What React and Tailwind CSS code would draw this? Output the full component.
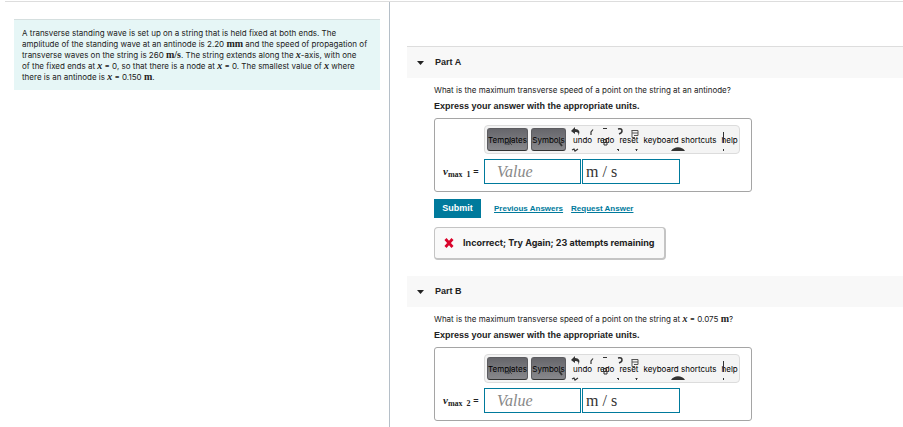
const parts = [
  { id: "a", title: "Part A", index: 1, attempts: 23 },
  { id: "b", title: "Part B", index: 2 },
];

function Var({ children }) {
  return <i className="font-['Liberation_Serif',serif] text-[10px] font-bold leading-none">{children}</i>;
}

function Unit({ children }) {
  return <span className="font-['Liberation_Serif',serif] text-[10px] font-bold leading-none">{children}</span>;
}

// clipped toolbar icons that show through behind the labels
function ToolbarMarks() {
  return (
    <svg
      className="pointer-events-none absolute -left-px -top-px"
      width="256"
      height="29"
      viewBox="0 0 256 29"
      fill="none"
      stroke="#333"
      aria-hidden="true"
    >
      <path d="M91 2l-4 4 4 3V7c3 0 4 1 3 4 3-4 1-7-3-7z" fill="#333" stroke="none" />
      <path d="M88 25l2-1 1 2 3-2M109 4.500l-2 2.500v3" strokeWidth="1.2" />
      <path d="M25 13v7M28 14l-3 3 3 3M22 19h3" strokeWidth=".8" />
      <path d="M75 17l3 4" strokeWidth="1.8" />
      <path d="M119 3.500h4" />
      <path d="M119.500 14.500h3v3h-3zM120 17.500h3v2.500h-3z" strokeWidth="1" />
      <path d="M134 4q4-1 4 2q0 2-3 3" strokeWidth="1.5" />
      <path d="M133 24.500h2M151.500 24.500h2M134.500 24v2M152.500 24v2" strokeWidth="1" />
      <path d="M147.500 5.500h6.500v5M148 5.500v7h3M148 8h6M150 10.500h4" stroke="#555" />
      <path d="M187 26c3-5 11-5 14 0z" fill="#333" stroke="none" />
      <path d="M239.500 7v11M239.500 24v2" />
    </svg>
  );
}

function PadButton({ children }) {
  return (
    <button
      type="button"
      className="flex h-[23px] items-center justify-center rounded-[3px] border border-b-[#333] border-[#5c5c60] bg-linear-to-b from-[#66666b] to-[#88888c] text-black"
    >
      {children}
    </button>
  );
}

function Toolbar() {
  return (
    <div className="relative flex h-[29px] w-64 items-center rounded border border-[#dcdcdc] bg-[#f4f4f4] pl-[2px] font-['Inter',sans-serif] text-[8px] leading-3 text-black">
      <div className="grid grid-cols-[41px_35px] gap-[3px]">
        <PadButton>Templates</PadButton>
        <PadButton>Symbols</PadButton>
      </div>
      <div className="ml-[7px] flex gap-[5px] whitespace-nowrap">
        <button type="button">undo</button>
        <button type="button">redo</button>
        <button type="button">reset</button>
        <button type="button">keyboard shortcuts</button>
        <button type="button">help</button>
      </div>
      <ToolbarMarks />
    </div>
  );
}

function AnswerBox({ index }) {
  const field =
    "h-[25px] border border-[#007a9c] bg-white font-['Liberation_Serif',serif] text-base leading-5 text-[#333] outline-none";
  return (
    <div className="w-[318px] rounded-[3px] border border-[#a5a5a5] pb-[7px] pl-2 pt-[6px]">
      <div className="ml-[41px]">
        <Toolbar />
      </div>
      <div className="mt-[5px] flex items-center">
        <label
          htmlFor={"value-" + index}
          className="w-[41px] whitespace-nowrap font-['Liberation_Serif',serif] text-[11px] font-bold leading-3"
        >
          <i>v</i>
          <sub className="text-[8px] leading-none">max&nbsp; {index}</sub>{" "}
          <span className="font-['Liberation_Sans',sans-serif] text-[9px]">=</span>
        </label>
        <div className="flex gap-px">
          <input
            id={"value-" + index}
            placeholder="Value"
            className={field + " w-[97px] pl-3 placeholder:italic placeholder:text-[#888]"}
          />
          <input aria-label="Units" defaultValue="m / s" className={field + " w-[98px] pl-[3px]"} />
        </div>
      </div>
    </div>
  );
}

function Feedback({ attempts }) {
  return (
    <>
      <div className="mt-[7px] flex items-center">
        <button type="button" className="h-[19px] w-[47px] bg-[#007a9c] text-[9px] font-bold text-white">
          Submit
        </button>
        <a href="#previous" className="ml-[13px] text-[8px] font-bold text-[#007a9c] underline">
          Previous Answers
        </a>
        <a href="#request" className="ml-2 text-[8px] font-bold text-[#007a9c] underline">
          Request Answer
        </a>
      </div>
      <div className="mt-[9px] flex h-[33px] w-fit items-center rounded border border-b-2 border-r-2 border-[#c4c4c4] bg-[#f9f9f9] px-[9px] font-['Inter',sans-serif] text-[9px] font-bold">
        <svg width="10" height="10" viewBox="0 0 10 10" aria-hidden="true">
          <path d="M1.500 1l7 8M8.500 1l-7 8" stroke="#d9042b" strokeWidth="2.800" />
        </svg>
        <span className="ml-[9px]">Incorrect; Try Again; {attempts} attempts remaining</span>
      </div>
    </>
  );
}

function Part({ part, children }) {
  return (
    <section>
      <h2
        className={
          "flex items-center bg-[#f8f8f8] pl-[10px] text-[9px] font-bold " +
          (part.id === "a" ? "h-8 border-t border-[#ddd]" : "h-[31px]")
        }
      >
        <svg width="7" height="4" viewBox="0 0 7 4" aria-hidden="true">
          <path d="M0 0h7L3.500 4z" fill="#222" />
        </svg>
        <span className="ml-[11px]">{part.title}</span>
      </h2>
      <div className="pl-[27px] pt-1">
        <p className="font-['Inter',sans-serif] text-[8px] leading-4">
          What is the maximum transverse speed of a point on the string at {children}
        </p>
        <p className="mb-1 text-[9px] font-bold leading-4">
          Express your answer with the appropriate units.
        </p>
        <AnswerBox index={part.index} />
        {part.attempts && <Feedback attempts={part.attempts} />}
      </div>
    </section>
  );
}

export default function App() {
  return (
    <div className="flex min-h-screen flex-col bg-white pt-px font-['Liberation_Sans',sans-serif] text-[#222]">
      <div className="ml-[5px] border-t border-[#ddd]" />
      <main className="grid grow grid-cols-[390fr_513fr]">
        <aside className="border-r border-[#b5bfc8] pl-[14px] pr-[9px] pt-[17px]">
          <p className="border-t border-[#d5dfdf] bg-[#e6f6f6] pb-[7px] pl-2 pr-1 pt-2 font-['Inter',sans-serif] text-[8px] leading-[11px]">
            A transverse standing wave is set up on a string that is held fixed at both ends. The
            <br />
            amplitude of the standing wave at an antinode is 2.20 <Unit>mm</Unit> and the speed of propagation of
            <br />
            transverse waves on the string is 260 <Unit>m/s</Unit>. The string extends along the{" "}
            <Var>x</Var>-axis, with one
            <br />
            of the fixed ends at <Var>x</Var> = 0, so that there is a node at{" "}
            <Var>x</Var> = 0. The smallest value of <Var>x</Var> where
            <br />
            there is an antinode is <Var>x</Var> = 0.150 <Unit>m</Unit>.
          </p>
        </aside>
        <div className="flex flex-col gap-4 pl-[17px] pt-11">
          <Part part={parts[0]}>an antinode?</Part>
          <Part part={parts[1]}>
            <Var>x</Var> = 0.075 <Unit>m</Unit>?
          </Part>
        </div>
      </main>
    </div>
  );
}
